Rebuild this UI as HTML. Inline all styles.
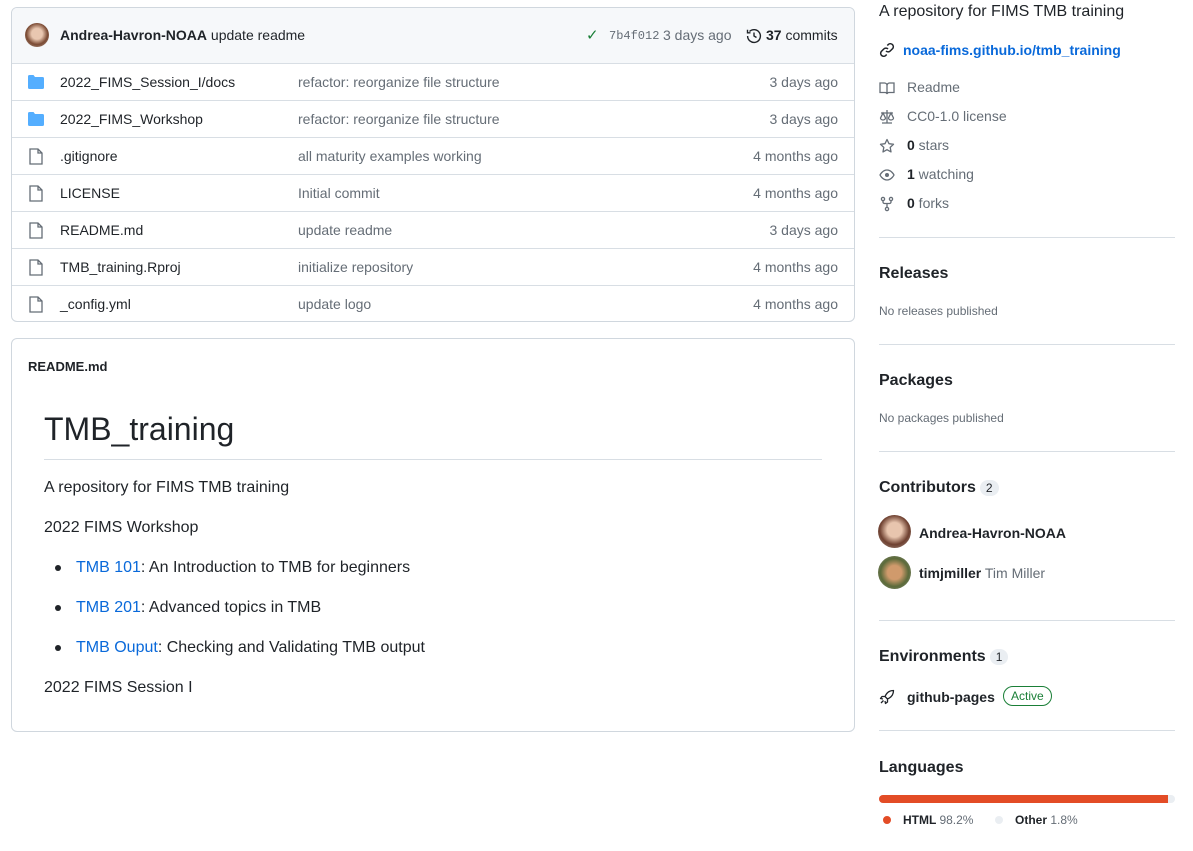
<!DOCTYPE html>
<html><head><meta charset="utf-8"><style>
*{box-sizing:border-box;margin:0;padding:0}
body{width:1193px;height:851px;background:#fff;font-family:"Liberation Sans",Arial,sans-serif;color:#1f2328;position:relative;overflow:hidden;font-size:14px}
.a{position:absolute;white-space:nowrap}
.box{position:absolute;border:1px solid #d0d7de;border-radius:6px}
.row{position:absolute;left:0;right:0;height:37px;border-top:1px solid #d8dee4;font-size:14px}
.row span{position:absolute;top:10px}
.m{color:#656d76}
.hr{position:absolute;left:879px;width:296px;height:1px;background:#d8dee4}
.h2{font-size:16px;font-weight:600}
.sm{font-size:12px;color:#656d76}
.cnt{display:inline-block;background:#eaeef2;border-radius:10px;font-size:12px;padding:1px 6px;margin-left:4px;font-weight:500}
a{color:#0969da;text-decoration:none}
.ic{position:absolute;left:879px}
</style></head><body>
<div class="box" style="left:11px;top:7px;width:844px;height:315px;overflow:hidden">
 <div style="position:absolute;left:0;right:0;top:0;height:55px;background:#f6f8fa"></div>
 <div class="a" style="left:13px;top:15px;width:24px;height:24px;border-radius:50%;background:radial-gradient(circle at 50% 45%,#e9c7b0 30%,#7a4a33 60%,#b9a79a)"></div>
 <div class="a" style="left:48px;top:19px"><b style="font-weight:600">Andrea-Havron-NOAA</b> <span style="color:#1f2328">update readme</span></div>
 <div class="a" style="left:574px;top:18px;color:#1a7f37;font-size:15px">✓</div>
 <div class="a m" style="left:597px;top:21px;font-family:'Liberation Mono',monospace;font-size:12px">7b4f012</div>
 <div class="a m" style="left:651px;top:19px">3 days ago</div>
 <svg class="a" style="left:734px;top:20px" width="16" height="16" viewBox="0 0 16 16"><path d="M1.6 8a6.4 6.4 0 1 0 1.9-4.5M1.5 1.8v3h3M8 4.5V8l2.5 1.5" fill="none" stroke="#1f2328" stroke-width="1.4"/></svg>
 <div class="a" style="left:754px;top:19px"><b>37</b> commits</div>
 <div class="row" style="top:55px"><svg class="a" style="left:16px;top:11px" width="16" height="14"><path d="M0 1.5a1.5 1.5 0 0 1 1.5-1.5h4l1.5 2h7.5a1.5 1.5 0 0 1 1.5 1.5v9a1.5 1.5 0 0 1-1.5 1.5h-13a1.5 1.5 0 0 1-1.5-1.5z" fill="#54aeff"/></svg><span style="left:48px">2022_FIMS_Session_I/docs</span><span class="m" style="left:286px">refactor: reorganize file structure</span><span class="m" style="right:16px">3 days ago</span></div>
 <div class="row" style="top:92px"><svg class="a" style="left:16px;top:11px" width="16" height="14"><path d="M0 1.5a1.5 1.5 0 0 1 1.5-1.5h4l1.5 2h7.5a1.5 1.5 0 0 1 1.5 1.5v9a1.5 1.5 0 0 1-1.5 1.5h-13a1.5 1.5 0 0 1-1.5-1.5z" fill="#54aeff"/></svg><span style="left:48px">2022_FIMS_Workshop</span><span class="m" style="left:286px">refactor: reorganize file structure</span><span class="m" style="right:16px">3 days ago</span></div>
 <div class="row" style="top:129px"><svg class="a" style="left:17px;top:10px" width="14" height="17"><path d="M1 1h8l4 4v11H1z M9 1v4h4" fill="none" stroke="#656d76" stroke-width="1.3"/></svg><span style="left:48px">.gitignore</span><span class="m" style="left:286px">all maturity examples working</span><span class="m" style="right:16px">4 months ago</span></div>
 <div class="row" style="top:166px"><svg class="a" style="left:17px;top:10px" width="14" height="17"><path d="M1 1h8l4 4v11H1z M9 1v4h4" fill="none" stroke="#656d76" stroke-width="1.3"/></svg><span style="left:48px">LICENSE</span><span class="m" style="left:286px">Initial commit</span><span class="m" style="right:16px">4 months ago</span></div>
 <div class="row" style="top:203px"><svg class="a" style="left:17px;top:10px" width="14" height="17"><path d="M1 1h8l4 4v11H1z M9 1v4h4" fill="none" stroke="#656d76" stroke-width="1.3"/></svg><span style="left:48px">README.md</span><span class="m" style="left:286px">update readme</span><span class="m" style="right:16px">3 days ago</span></div>
 <div class="row" style="top:240px"><svg class="a" style="left:17px;top:10px" width="14" height="17"><path d="M1 1h8l4 4v11H1z M9 1v4h4" fill="none" stroke="#656d76" stroke-width="1.3"/></svg><span style="left:48px">TMB_training.Rproj</span><span class="m" style="left:286px">initialize repository</span><span class="m" style="right:16px">4 months ago</span></div>
 <div class="row" style="top:277px"><svg class="a" style="left:17px;top:10px" width="14" height="17"><path d="M1 1h8l4 4v11H1z M9 1v4h4" fill="none" stroke="#656d76" stroke-width="1.3"/></svg><span style="left:48px">_config.yml</span><span class="m" style="left:286px">update logo</span><span class="m" style="right:16px">4 months ago</span></div>
</div>

<div class="box" style="left:11px;top:338px;width:844px;height:394px">
 <div class="a" style="left:16px;top:20px;font-size:13px;font-weight:600">README.md</div>
 <div class="a" style="left:32px;top:72px;font-size:32px;font-weight:500">TMB_training</div>
 <div class="a" style="left:32px;top:120px;width:778px;height:1px;background:#d8dee4"></div>
 <div class="a" style="left:32px;top:140px;font-size:16px">A repository for FIMS TMB training</div>
 <div class="a" style="left:32px;top:180px;font-size:16px">2022 FIMS Workshop</div>
 <div class="a" style="left:43px;top:226px;width:6px;height:6px;border-radius:50%;background:#1f2328"></div>
 <div class="a" style="left:64px;top:220px;font-size:16px"><a>TMB 101</a>: An Introduction to TMB for beginners</div>
 <div class="a" style="left:43px;top:266px;width:6px;height:6px;border-radius:50%;background:#1f2328"></div>
 <div class="a" style="left:64px;top:260px;font-size:16px"><a>TMB 201</a>: Advanced topics in TMB</div>
 <div class="a" style="left:43px;top:306px;width:6px;height:6px;border-radius:50%;background:#1f2328"></div>
 <div class="a" style="left:64px;top:300px;font-size:16px"><a>TMB Ouput</a>: Checking and Validating TMB output</div>
 <div class="a" style="left:32px;top:340px;font-size:16px">2022 FIMS Session I</div>
</div>

<div class="a" style="left:879px;top:3px;font-size:16px">A repository for FIMS TMB training</div>
<svg class="ic" style="top:42px" width="16" height="16" viewBox="0 0 16 16"><path d="M7 9a3 3 0 0 0 4.2 0l2.5-2.5a3 3 0 0 0-4.2-4.2L8.3 3.5M9 7a3 3 0 0 0-4.2 0L2.3 9.5a3 3 0 0 0 4.2 4.2l1.2-1.2" fill="none" stroke="#1f2328" stroke-width="1.5"/></svg>
<div class="a" style="left:903px;top:42px;font-weight:600"><a>noaa-fims.github.io/tmb_training</a></div>
<svg class="ic" style="top:80px" width="16" height="16" viewBox="0 0 16 16"><path d="M1 3h4.5A2.5 2.5 0 0 1 8 5.5V14a2 2 0 0 0-2-1.5H1zM15 3h-4.5A2.5 2.5 0 0 0 8 5.5V14a2 2 0 0 1 2-1.5h5z" fill="none" stroke="#656d76" stroke-width="1.3"/></svg>
<div class="a m" style="left:907px;top:79px">Readme</div>
<svg class="ic" style="top:109px" width="16" height="16" viewBox="0 0 16 16"><path d="M8 1v13M3 14h10M2 4h12M4 4l-2.5 5a2.5 2 0 0 0 5 0zM12 4l-2.5 5a2.5 2 0 0 0 5 0z" fill="none" stroke="#656d76" stroke-width="1.3"/></svg>
<div class="a m" style="left:907px;top:108px">CC0-1.0 license</div>
<svg class="ic" style="top:138px" width="16" height="16" viewBox="0 0 16 16"><path d="M8 1.5l2 4.2 4.5.6-3.3 3.1.8 4.5L8 11.7l-4 2.2.8-4.5L1.5 6.3 6 5.7z" fill="none" stroke="#656d76" stroke-width="1.3" stroke-linejoin="round"/></svg>
<div class="a m" style="left:907px;top:137px"><b style="color:#1f2328">0</b> stars</div>
<svg class="ic" style="top:167px" width="16" height="16" viewBox="0 0 16 16"><path d="M1 8s2.5-5 7-5 7 5 7 5-2.5 5-7 5-7-5-7-5z" fill="none" stroke="#656d76" stroke-width="1.3"/><circle cx="8" cy="8" r="2" fill="#656d76"/></svg>
<div class="a m" style="left:907px;top:166px"><b style="color:#1f2328">1</b> watching</div>
<svg class="ic" style="top:196px" width="16" height="16" viewBox="0 0 16 16"><circle cx="4" cy="3" r="1.6" fill="none" stroke="#656d76" stroke-width="1.3"/><circle cx="12" cy="3" r="1.6" fill="none" stroke="#656d76" stroke-width="1.3"/><circle cx="8" cy="13" r="1.6" fill="none" stroke="#656d76" stroke-width="1.3"/><path d="M4 4.6V6a1.5 1.5 0 0 0 1.5 1.5h5A1.5 1.5 0 0 0 12 6V4.6M8 7.5v4" fill="none" stroke="#656d76" stroke-width="1.3"/></svg>
<div class="a m" style="left:907px;top:195px"><b style="color:#1f2328">0</b> forks</div>
<div class="hr" style="top:237px"></div>
<div class="a h2" style="left:879px;top:265px">Releases</div>
<div class="a sm" style="left:879px;top:304px">No releases published</div>
<div class="hr" style="top:344px"></div>
<div class="a h2" style="left:879px;top:372px">Packages</div>
<div class="a sm" style="left:879px;top:411px">No packages published</div>
<div class="hr" style="top:451px"></div>
<div class="a h2" style="left:879px;top:479px">Contributors<span class="cnt">2</span></div>
<div class="a" style="left:878px;top:515px;width:33px;height:33px;border-radius:50%;background:radial-gradient(circle at 50% 45%,#e8c5ae 30%,#6e4030 60%,#a89a90)"></div>
<div class="a" style="left:919px;top:525px;font-weight:600">Andrea-Havron-NOAA</div>
<div class="a" style="left:878px;top:556px;width:33px;height:33px;border-radius:50%;background:radial-gradient(circle at 50% 50%,#d09a6c 30%,#5b6a3a 60%,#8a8f7c)"></div>
<div class="a" style="left:919px;top:565px"><b style="font-weight:600">timjmiller</b> <span class="m">Tim Miller</span></div>
<div class="hr" style="top:620px"></div>
<div class="a h2" style="left:879px;top:648px">Environments<span class="cnt">1</span></div>
<svg class="ic" style="top:689px" width="16" height="16" viewBox="0 0 16 16"><path d="M14.5 1.5c-4 0-7 2.5-8.5 6l2.5 2.5c3.5-1.5 6-4.5 6-8.5zM6 7.5H3L1.5 9.5 4 10M8.5 10v3l-2 1.5L6 12M4.5 11.5 2 14" fill="none" stroke="#1f2328" stroke-width="1.3" stroke-linejoin="round"/></svg>
<div class="a" style="left:907px;top:689px;font-weight:600">github-pages</div>
<div class="a" style="left:1003px;top:686px;border:1px solid #1a7f37;color:#1a7f37;border-radius:10px;font-size:12px;padding:2px 7px">Active</div>
<div class="hr" style="top:730px"></div>
<div class="a h2" style="left:879px;top:759px">Languages</div>
<div class="a" style="left:879px;top:795px;width:296px;height:8px;border-radius:4px;background:#eaeef2;overflow:hidden"><div style="width:289px;height:8px;background:#e34c26"></div></div>
<div class="a" style="left:883px;top:816px;width:8px;height:8px;border-radius:50%;background:#e34c26"></div>
<div class="a" style="left:903px;top:813px;font-size:12px;font-weight:600">HTML <span class="m" style="font-weight:400">98.2%</span></div>
<div class="a" style="left:995px;top:816px;width:8px;height:8px;border-radius:50%;background:#eaeef2"></div>
<div class="a" style="left:1015px;top:813px;font-size:12px;font-weight:600">Other <span class="m" style="font-weight:400">1.8%</span></div>
</body></html>
